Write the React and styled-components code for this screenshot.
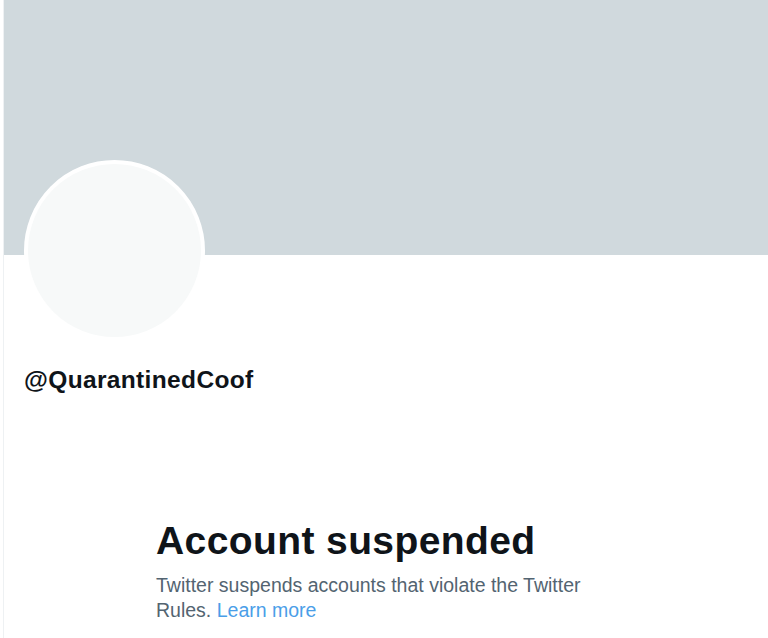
import React from "react"
import styled, { createGlobalStyle } from "styled-components"

const GlobalStyle = createGlobalStyle`
  html, body {
    margin: 0;
    padding: 0;
    background: #ffffff;
  }
  body {
    font-family: "Liberation Sans", Arial, sans-serif;
  }
`

const App = () => {
  return (
    <>
      <GlobalStyle />
      <Page>
        <Banner />
        <ProfileHeader>
          <Avatar />
          <Handle>@QuarantinedCoof</Handle>
        </ProfileHeader>
        <Notice>
          <NoticeTitle>Account suspended</NoticeTitle>
          <NoticeText>
            Twitter suspends accounts that violate the Twitter Rules.{" "}
            <NoticeLink href="#">Learn more</NoticeLink>
          </NoticeText>
        </Notice>
      </Page>
    </>
  )
}

export default App

const Page = styled.div`
  min-height: 638px;
  margin-left: 3px;
  border-left: 1px solid #eef1f3;
  background: #ffffff;
`
const Banner = styled.div`
  height: 255px;
  background: #d0d9dd;
`
const ProfileHeader = styled.div`
  display: flex;
  flex-direction: column;
  align-items: flex-start;
  padding: 0 20px;
`
const Avatar = styled.div`
  width: 173px;
  height: 173px;
  margin-top: -95px;
  border: 4px solid #ffffff;
  border-radius: 50%;
  background: #f7f9f9;
`
const Handle = styled.div`
  margin-top: 24px;
  font-size: 24.5px;
  line-height: 29px;
  font-weight: 700;
  letter-spacing: 0.35px;
  color: #0f1419;
`
const Notice = styled.div`
  width: 460px;
  margin: 124px auto 0;
`
const NoticeTitle = styled.h1`
  margin: 0;
  font-size: 39px;
  line-height: 45px;
  font-weight: 700;
  letter-spacing: 0.4px;
  color: #0f1419;
`
const NoticeText = styled.p`
  margin: 10px 0 0;
  font-size: 19.5px;
  line-height: 25px;
  color: #536471;
`
const NoticeLink = styled.a`
  color: #4a9ee8;
  text-decoration: none;
`
